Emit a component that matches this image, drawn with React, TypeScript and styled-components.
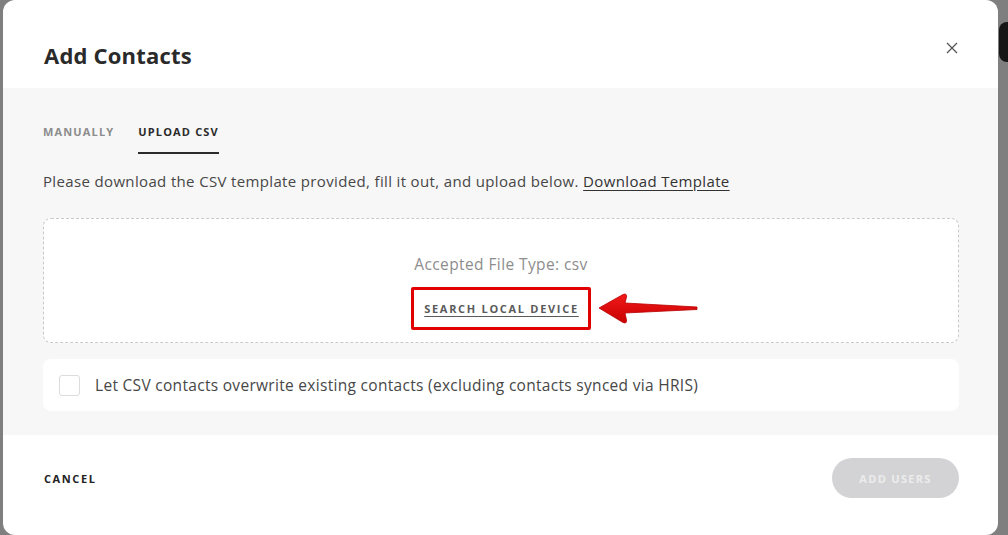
import React from "react";
import styled, { createGlobalStyle } from "styled-components";

const Global = createGlobalStyle`
  html, body { margin: 0; padding: 0; }
  body {
    width: 1008px;
    height: 535px;
    overflow: hidden;
    background: #7f7f7f;
    font-family: "Open Sans", "Noto Sans", sans-serif;
  }
`;

const Page = styled.div`
  position: relative;
  width: 1008px;
  height: 535px;
  display: flex;
  padding-left: 3px;
  box-sizing: border-box;
`;

const BehindTab = styled.div`
  position: absolute;
  right: 0;
  top: 22px;
  width: 9px;
  height: 40px;
  background: #161616;
  border-radius: 8px 0 0 8px;
`;

const Modal = styled.div`
  width: 995px;
  height: 535px;
  background: #fff;
  border-radius: 12px;
  display: flex;
  flex-direction: column;
  overflow: hidden;
  position: relative;
  z-index: 1;
`;

const Header = styled.div`
  height: 88px;
  flex: none;
  display: flex;
  align-items: flex-start;
  justify-content: space-between;
  padding: 0 40px 0 41px;
  box-sizing: border-box;
`;

const Title = styled.h1`
  margin: 40px 0 0;
  font-size: 22px;
  line-height: 30px;
  font-weight: 700;
  color: #2a2a2a;
  letter-spacing: 0.2px;
`;

const Close = styled.button`
  border: none;
  background: none;
  padding: 0;
  width: 12px;
  height: 12px;
  display: flex;
  margin-top: 42px;
  cursor: pointer;
`;

const Body = styled.div`
  flex: none;
  height: 347px;
  background: #f7f7f7;
  padding: 0 39px 0 40px;
  box-sizing: border-box;
  display: flex;
  flex-direction: column;
`;

const Tabs = styled.div`
  display: flex;
  gap: 24px;
  margin-top: 33px;
`;

const Tab = styled.div<{ $active?: boolean }>`
  font-size: 11px;
  font-weight: 700;
  letter-spacing: 1.15px;
  color: ${(p) => (p.$active ? "#2b2b2b" : "#8c8c8c")};
  padding: 4px 0 13px;
  border-bottom: 2px solid ${(p) => (p.$active ? "#2b2b2b" : "transparent")};
  line-height: 14px;
`;

const Intro = styled.p`
  margin: 16px 0 0;
  font-size: 15px;
  letter-spacing: 0.35px;
  color: #474747;
  line-height: 22px;
`;

const Link = styled.a`
  color: #333;
  text-decoration: underline;
  text-underline-offset: 3px;
  font-weight: 500;
`;

const Drop = styled.div`
  margin-top: 26px;
  height: 125px;
  flex: none;
  box-sizing: border-box;
  border: 1px dashed #c9c9c9;
  border-radius: 8px;
  background: #fff;
  display: flex;
  flex-direction: column;
  align-items: center;
  padding-top: 34px;
`;

const Accepted = styled.div`
  font-size: 15.5px;
  letter-spacing: 0.4px;
  color: #8d8d8d;
  line-height: 22px;
`;

const SearchRow = styled.div`
  position: relative;
  flex: none;
  margin-top: 12px;
`;

const SearchBtn = styled.button`
  box-sizing: border-box;
  width: 180px;
  height: 43px;
  border: 3px solid #e00000;
  border-radius: 2px;
  background: none;
  font-family: inherit;
  font-size: 11px;
  font-weight: 700;
  letter-spacing: 1.7px;
  color: #5a5a5a;
  text-decoration: underline;
  text-underline-offset: 3px;
  padding: 0 0 0 1px;
  display: flex;
  align-items: center;
  justify-content: center;
`;

const Arrow = styled.svg`
  position: absolute;
  left: calc(100% + 6px);
  top: 5px;
`;

const CheckCard = styled.label`
  margin-top: 16px;
  height: 52px;
  flex: none;
  background: #fff;
  border-radius: 8px;
  display: flex;
  align-items: center;
  padding-left: 16px;
  gap: 15px;
`;

const Box = styled.span`
  width: 19px;
  height: 19px;
  border: 1px solid #dcdcdc;
  border-radius: 3px;
  background: #fff;
`;

const CheckText = styled.span`
  font-size: 15.5px;
  letter-spacing: 0.3px;
  color: #474747;
`;

const Footer = styled.div`
  flex: 1;
  display: flex;
  align-items: center;
  justify-content: space-between;
  padding: 0 39px 14px 41px;
`;

const Cancel = styled.button`
  border: none;
  background: none;
  font-family: inherit;
  padding: 0;
  font-size: 11px;
  font-weight: 700;
  letter-spacing: 1.6px;
  color: #222;
`;

const Primary = styled.button`
  border: none;
  font-family: inherit;
  width: 127px;
  height: 40px;
  border-radius: 20px;
  background: #d3d3d5;
  color: #ececec;
  font-size: 11px;
  font-weight: 700;
  letter-spacing: 1.3px;
`;

export default function App() {
  return (
    <>
      <Global />
      <Page>
        <BehindTab />
        <Modal>
          <Header>
            <Title>Add Contacts</Title>
            <Close aria-label="close">
              <svg width="12" height="12" viewBox="0 0 12 12">
                <path d="M1 1L11 11M11 1L1 11" stroke="#555" strokeWidth="1.3" />
              </svg>
            </Close>
          </Header>
          <Body>
            <Tabs>
              <Tab>MANUALLY</Tab>
              <Tab $active>UPLOAD CSV</Tab>
            </Tabs>
            <Intro>
              Please download the CSV template provided, fill it out, and upload below.{" "}
              <Link>Download Template</Link>
            </Intro>
            <Drop>
              <Accepted>Accepted File Type: csv</Accepted>
              <SearchRow>
                <SearchBtn>SEARCH LOCAL DEVICE</SearchBtn>
                <Arrow width="102" height="34" viewBox="0 0 102 34">
                  <defs>
                    <linearGradient id="ar" x1="0" y1="0" x2="0" y2="1">
                      <stop offset="0" stopColor="#f21a1a" />
                      <stop offset="1" stopColor="#c80000" />
                    </linearGradient>
                  </defs>
                  <path
                    d="M2 16 L26 2.5 Q30 1 29.5 5 L28 11 L100 15 L100 17.5 L28 21 L29.5 28 Q30 32 26 30.5 Z"
                    fill="url(#ar)"
                    stroke="#b80000"
                    strokeWidth="0.8"
                    strokeLinejoin="round"
                  />
                </Arrow>
              </SearchRow>
            </Drop>
            <CheckCard>
              <Box />
              <CheckText>
                Let CSV contacts overwrite existing contacts (excluding contacts synced via HRIS)
              </CheckText>
            </CheckCard>
          </Body>
          <Footer>
            <Cancel>CANCEL</Cancel>
            <Primary>ADD USERS</Primary>
          </Footer>
        </Modal>
      </Page>
    </>
  );
}
